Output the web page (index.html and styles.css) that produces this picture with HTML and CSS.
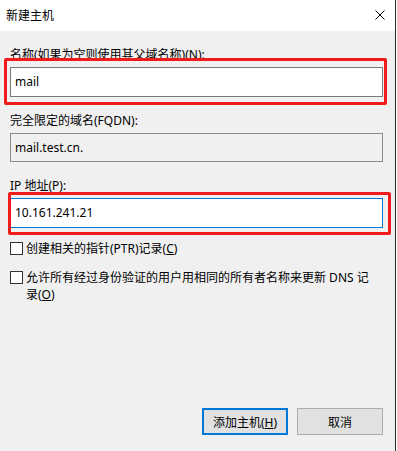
FILE: index.html
```html
<!DOCTYPE html>
<html lang="zh-CN">
<head>
  <meta charset="UTF-8">
  <title>新建主机</title>
  <link rel="stylesheet" href="styles.css">
</head>
<body>
  <div class="dialog">
    <div class="titlebar">
      <span class="title">新建主机</span>
      <svg class="close" viewBox="0 0 10 10" xmlns="http://www.w3.org/2000/svg">
        <path d="M0.5 0.5l9 9M9.5 0.5l-9 9" stroke="#000" stroke-width="1" fill="none"/>
      </svg>
    </div>

    <div class="content">
      <div class="field">
        <div class="label">名称(如果为空则使用其父域名称)(N):</div>
        <div class="input">mail</div>
        <div class="mark mark-name"></div>
      </div>

      <div class="field">
        <div class="label">完全限定的域名(FQDN):</div>
        <div class="input readonly">mail.test.cn.</div>
      </div>

      <div class="field">
        <div class="label">IP 地址(P):</div>
        <div class="input focused">10.161.241.21</div>
        <div class="mark mark-ip"></div>
      </div>

      <label class="check check-ptr">
        <span class="box"></span>
        <span class="check-text">创建相关的指针(PTR)记录(<span class="key">C</span>)</span>
      </label>

      <label class="check check-dns">
        <span class="box"></span>
        <span class="check-text">允许所有经过身份验证的用户用相同的所有者名称来更新 DNS 记录(<span class="key">O</span>)</span>
      </label>

      <div class="buttons">
        <button class="btn default">添加主机(<span class="key">H</span>)</button>
        <button class="btn">取消</button>
      </div>
    </div>
  </div>
</body>
</html>
```

FILE: styles.css
```css
body {
  margin: 0;
  background: #fff;
  font-family: "Noto Sans", "Noto Sans CJK SC", sans-serif;
  font-size: 12px;
  color: #000;
}

.dialog {
  width: 395px;
  height: 451px;
  border-right: 1px solid #2b2b2b;
  display: flex;
  flex-direction: column;
}

.titlebar {
  height: 31px;
  background: #fff;
  display: flex;
  align-items: center;
  justify-content: space-between;
  padding: 0 10px 0 6px;
}
.title {
  line-height: 16px;
}
.close {
  width: 10px;
  height: 10px;
  margin-top: -1px;
}

.content {
  flex: 1;
  background: #f0f0f0;
  display: flex;
  flex-direction: column;
  padding: 16px 12px 16px 10px;
}

.field {
  position: relative;
}
.label {
  line-height: 16px;
  margin-bottom: 4px;
}
.field + .field {
  margin-top: 16px;
}
.input {
  box-sizing: border-box;
  height: 30px;
  border: 1px solid #7a7a7a;
  background: #fff;
  padding: 0 4px;
  line-height: 27px;
}
.input.readonly {
  background: #f0f0f0;
  border-color: #8c8c8c;
  height: 29px;
}
.input.focused {
  border-color: #0078d7;
}

/* red annotation frames */
.mark {
  position: absolute;
  box-sizing: border-box;
  border: 3px solid #f01c1c;
  border-radius: 2px;
}
.mark-name {
  left: -6px;
  top: 11px;
  width: 383px;
  height: 47px;
}
.mark-ip {
  left: -2px;
  top: 14px;
  width: 383px;
  height: 43px;
}

.check {
  display: flex;
  align-items: flex-start;
  line-height: 17px;
}
.check-ptr {
  margin-top: 12px;
}
.check-dns {
  margin-top: 12px;
}
.box {
  flex: none;
  box-sizing: border-box;
  width: 13px;
  height: 13px;
  border: 1px solid #333;
  background: #fff;
  margin: 2px 3px 0 0;
}
.check-text {
  width: 348px;
}
.key {
  text-decoration: underline;
}

.buttons {
  margin-top: auto;
  display: flex;
  justify-content: flex-end;
  gap: 9px;
}
.btn {
  box-sizing: border-box;
  width: 86px;
  height: 27px;
  border: 1px solid #adadad;
  background: #e1e1e1;
  font-family: inherit;
  font-size: 12px;
  color: #000;
  padding: 0;
}
.btn.default {
  border: 2px solid #0078d7;
}
```
